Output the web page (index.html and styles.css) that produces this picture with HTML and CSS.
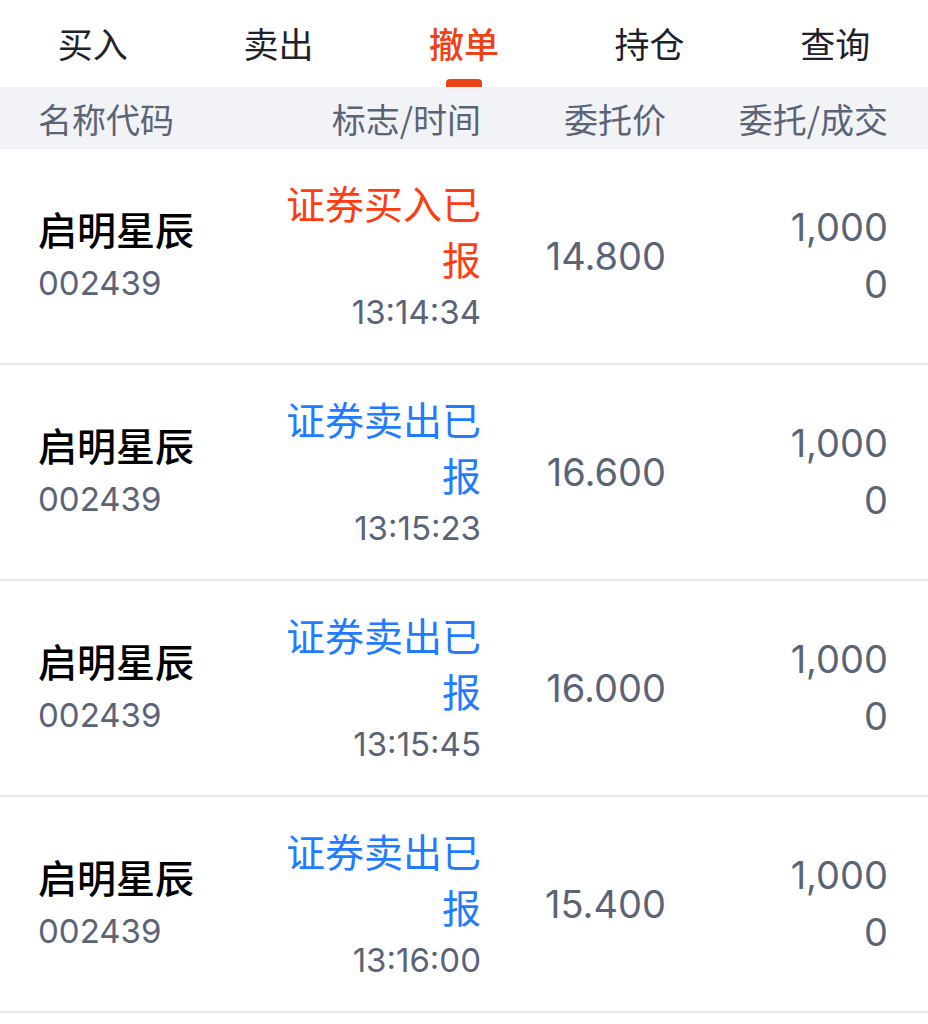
FILE: index.html
```html
<!DOCTYPE html>
<html lang="zh-CN">
<head>
<meta charset="utf-8">
<link rel="stylesheet" href="styles.css">
</head>
<body>
<div class="page">
  <nav class="tabs">
    <div class="tab">买入</div>
    <div class="tab">卖出</div>
    <div class="tab active">撤单</div>
    <div class="tab">持仓</div>
    <div class="tab">查询</div>
  </nav>
  <div class="head row-grid">
    <div class="c1">名称代码</div>
    <div class="c2">标志/时间</div>
    <div class="c3">委托价</div>
    <div class="c4">委托/成交</div>
  </div>
  <div class="list">
    <div class="row row-grid">
      <div class="c1"><div class="name">启明星辰</div><div class="code">002439</div></div>
      <div class="c2"><div class="flag buy">证券买入已报</div><div class="time">13:14:34</div></div>
      <div class="c3 price">14.800</div>
      <div class="c4 qty"><div>1,000</div><div>0</div></div>
    </div>
    <div class="row row-grid">
      <div class="c1"><div class="name">启明星辰</div><div class="code">002439</div></div>
      <div class="c2"><div class="flag sell">证券卖出已报</div><div class="time">13:15:23</div></div>
      <div class="c3 price">16.600</div>
      <div class="c4 qty"><div>1,000</div><div>0</div></div>
    </div>
    <div class="row row-grid">
      <div class="c1"><div class="name">启明星辰</div><div class="code">002439</div></div>
      <div class="c2"><div class="flag sell">证券卖出已报</div><div class="time">13:15:45</div></div>
      <div class="c3 price">16.000</div>
      <div class="c4 qty"><div>1,000</div><div>0</div></div>
    </div>
    <div class="row row-grid">
      <div class="c1"><div class="name">启明星辰</div><div class="code">002439</div></div>
      <div class="c2"><div class="flag sell">证券卖出已报</div><div class="time">13:16:00</div></div>
      <div class="c3 price">15.400</div>
      <div class="c4 qty"><div>1,000</div><div>0</div></div>
    </div>
  </div>
</div>
</body>
</html>
```

FILE: styles.css
```css
* { box-sizing: border-box; }
html, body { margin: 0; padding: 0; background: #ffffff; }
body {
  font-family: "Inter", "Noto Sans CJK SC", sans-serif;
  color: #5b6477;
}
.page { width: 928px; }

.tabs {
  display: grid;
  grid-template-columns: repeat(5, 1fr);
  height: 87px;
}
.tab {
  position: relative;
  display: flex;
  align-items: center;
  justify-content: center;
  padding-bottom: 2px;
  font-family: "Noto Sans CJK SC", sans-serif;
  font-size: 35px;
  color: #1e222a;
}
.tab.active { color: #ec4218; font-weight: 500; }
.tab.active::after {
  content: "";
  position: absolute;
  left: 50%;
  bottom: 0;
  width: 36px;
  height: 8px;
  margin-left: -18px;
  border-radius: 4px 4px 0 0;
  background: #ec4218;
}

.row-grid {
  display: grid;
  grid-template-columns: 233px 210px 185px 222px;
  padding: 0 40px 0 38px;
  align-items: center;
}
.c2, .c3, .c4 { text-align: right; }

.head {
  height: 62px;
  background: #f2f3f7;
  font-family: "Noto Sans CJK SC", sans-serif;
  font-size: 34px;
  color: #5b6477;
}

.row {
  height: 216px;
  border-bottom: 2px solid #e6e8ec;
}
.name {
  font-family: "Noto Sans CJK SC", sans-serif;
  font-size: 39px;
  font-weight: 500;
  color: #000000;
  line-height: 55px;
}
.code {
  font-size: 33px;
  line-height: 55px;
}
.flag {
  font-family: "Noto Sans CJK SC", sans-serif;
  font-size: 39px;
  line-height: 56px;
  margin-left: 8px;
}
.flag.buy { color: #ff3b10; }
.flag.sell { color: #1f7bff; }
.time {
  font-size: 33px;
  line-height: 52px;
}
.price {
  font-size: 38px;
}
.qty {
  font-size: 38px;
  line-height: 57px;
}
```
